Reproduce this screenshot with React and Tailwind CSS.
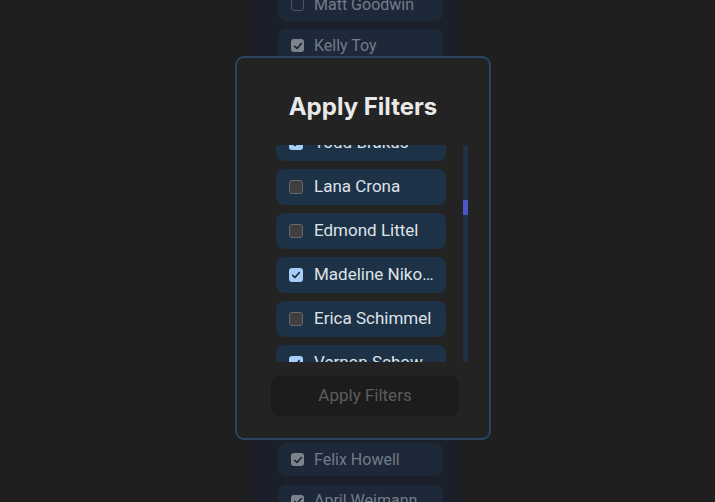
import React from 'react';

const bgPeople = [
  { name: 'Matt Goodwin', checked: false },
  { name: 'Kelly Toy', checked: true },
  { name: 'Todd Brakus', checked: true },
  { name: 'Lana Crona', checked: false },
  { name: 'Edmond Littel', checked: false },
  { name: 'Madeline Nikolaus', checked: true },
  { name: 'Erica Schimmel', checked: false },
  { name: 'Vernon Schowalter', checked: true },
  { name: 'Gina Hermann', checked: false },
  { name: 'Ross Kuhic', checked: true },
  { name: 'Della Ward', checked: false },
  { name: 'Felix Howell', checked: true },
  { name: 'April Weimann', checked: true },
];

const modalPeople = [
  { name: 'Todd Brakus', checked: true },
  { name: 'Lana Crona', checked: false },
  { name: 'Edmond Littel', checked: false },
  { name: 'Madeline Nikolaus', checked: true },
  { name: 'Erica Schimmel', checked: false },
  { name: 'Vernon Schowalter', checked: true },
];

const Check = ({ color }) => (
  <svg viewBox="0 0 12 12" className="w-[10px] h-[10px]">
    <path d="M2 6.4 L4.8 9 L10 3" fill="none" stroke={color} strokeWidth="1.9" strokeLinecap="round" strokeLinejoin="round" />
  </svg>
);

const BgRow = ({ person }) => (
  <div className="h-[33px] rounded-[8px] bg-[#1d2839] flex items-center pl-[13px] shrink-0">
    {person.checked ? (
      <div className="w-[13px] h-[13px] rounded-[3px] bg-[#7d838d] flex items-center justify-center">
        <Check color="#1b2230" />
      </div>
    ) : (
      <div className="w-[13px] h-[13px] rounded-[3px] border border-[#4c5563]" />
    )}
    <span className="ml-[10px] text-[16px] text-[#737c89] whitespace-nowrap">{person.name}</span>
  </div>
);

const ModalRow = ({ person }) => (
  <div className="h-[36px] rounded-[8px] bg-[#1e3247] flex items-center pl-[13px] pr-[9px] shrink-0">
    {person.checked ? (
      <div className="w-[14px] h-[14px] shrink-0 rounded-[3px] bg-[#a6cefb] flex items-center justify-center">
        <Check color="#1c2633" />
      </div>
    ) : (
      <div className="w-[14px] h-[14px] shrink-0 rounded-[3px] bg-[#3f3f40] border-[1.5px] border-[#686868]" />
    )}
    <span className="ml-[11px] text-[17px] text-[#dde2e8] whitespace-nowrap overflow-hidden text-ellipsis">
      {person.name}
    </span>
  </div>
);

export default function App() {
  return (
    <div
      className="relative w-[715px] h-[502px] overflow-hidden bg-[#1f1f1f] flex justify-center"
      style={{ fontFamily: 'Roboto, "Noto Sans", sans-serif' }}
    >
      {/* Background list */}
      <div className="w-[208px] h-[520px] shrink-0 bg-[#1a1f29] pl-[25px] pr-[18px] flex flex-col gap-[8.4px] mt-[-12px] ml-[-1px]">
        {bgPeople.map((p) => (
          <BgRow key={p.name} person={p} />
        ))}
      </div>

      {/* Modal */}
      <div className="absolute left-[235px] top-[56px] w-[256px] h-[384px] rounded-[9px] border-2 border-[#284561] bg-[#232323] flex flex-col">
        <h2
          className="mt-[33px] text-center text-[24px] leading-[32px] font-bold text-[#e9e9e9]"
          style={{ fontFamily: 'Inter, sans-serif' }}
        >
          Apply Filters
        </h2>
        <div className="mt-[22px] h-[217px] flex pl-[39px]">
          <div className="w-[170px] h-full overflow-hidden">
            <div className="flex flex-col gap-[8px] mt-[-20px]">
              {modalPeople.map((p) => (
                <ModalRow key={p.name} person={p} />
              ))}
            </div>
          </div>
          <div className="ml-[17px] w-[5px] h-full bg-[#1e3246]">
            <div className="mt-[55px] w-[5px] h-[15px] bg-[#4b56c9]" />
          </div>
        </div>
        <button className="mt-[14px] ml-[34px] w-[188px] h-[40px] rounded-[8px] bg-[#1c1c1c] text-[17px] text-[#5c5c5c]">
          Apply Filters
        </button>
      </div>
    </div>
  );
}
